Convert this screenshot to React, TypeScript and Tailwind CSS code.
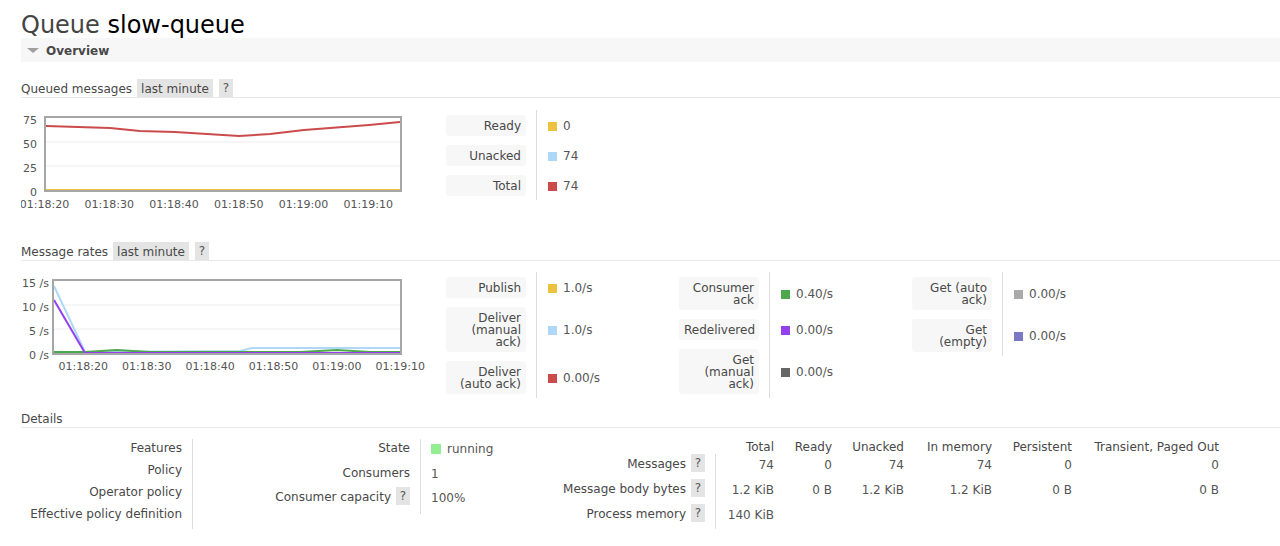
import React from "react";

type Row = { label: React.ReactNode; swatch: string; value: string };

function HelpBox() {
  return (
    <span className="inline-block h-[18px] w-[14px] bg-[#e4e4e4] pt-[1px] text-center leading-[17px] text-[#555]">
      ?
    </span>
  );
}

function SectionHeader({ title, buttons }: { title: string; buttons?: boolean }) {
  return (
    <div className="flex h-[19px] items-start border-b border-[#e8e8e8] text-[#484848]">
      <span className="pt-[2px] leading-[16px]">{title}</span>
      {buttons && (
        <>
          <span className="ml-[5px] h-[18px] bg-[#e4e4e4] px-[4px] pt-[2px] leading-[16px]">last minute</span>
          <span className="ml-[6px] flex">
            <HelpBox />
          </span>
        </>
      )}
    </div>
  );
}

function Legend({ rows }: { rows: Row[] }) {
  return (
    <div className="grid w-[233px] shrink-0 grid-cols-[91px_1fr] content-start">
      {rows.map((r, i) => (
        <React.Fragment key={i}>
          <div className="border-r border-[#dddddd] pt-[5px] pr-[10px] pb-[4px]">
            <div className="whitespace-nowrap rounded-[3px] bg-[#f7f7f7] px-[5px] pt-[5px] pb-[4px] text-right leading-[12px] text-[#484848]">
              {r.label}
            </div>
          </div>
          <div className="flex items-center pl-[11px] pt-[2px] text-[#555]">
            <span className={`mr-[6px] h-[9px] w-[9px] ${r.swatch}`} />
            <span>{r.value}</span>
          </div>
        </React.Fragment>
      ))}
    </div>
  );
}

function QueuedChart() {
  const xs = ["01:18:20", "01:18:30", "01:18:40", "01:18:50", "01:19:00", "01:19:10"];
  return (
    <svg width="404" height="100" viewBox="21 110 404 100" className="shrink-0">
      <line x1="46" y1="142" x2="400" y2="142" stroke="#ececec" strokeWidth="1" />
      <line x1="46" y1="166" x2="400" y2="166" stroke="#ececec" strokeWidth="1" />
      <polyline points="46,190 400,190" fill="none" stroke="#edc240" strokeWidth="2" />
      <polyline
        points="46,126 110,128 140,131 175,132 239,136 270,134 304,130 369,125 400,122"
        fill="none"
        stroke="#cb4b4b"
        strokeWidth="2"
      />
      <rect x="45" y="117" width="356" height="74" fill="none" stroke="#a6a6a6" strokeWidth="2" />
      <g fontSize="11" fill="#545454" fontFamily="DejaVu Sans, sans-serif">
        <text x="37" y="123.5" textAnchor="end">75</text>
        <text x="37" y="147.5" textAnchor="end">50</text>
        <text x="37" y="171.5" textAnchor="end">25</text>
        <text x="37" y="195.5" textAnchor="end">0</text>
        {xs.map((t, i) => (
          <text key={t} x={44.5 + i * 64.76} y="208" textAnchor="middle">
            {t}
          </text>
        ))}
      </g>
    </svg>
  );
}

function RatesChart() {
  const xs = ["01:18:20", "01:18:30", "01:18:40", "01:18:50", "01:19:00", "01:19:10"];
  return (
    <svg width="404" height="100" viewBox="21 273 404 100" className="shrink-0">
      <line x1="54" y1="306" x2="400" y2="306" stroke="#ececec" strokeWidth="1" />
      <line x1="54" y1="330" x2="400" y2="330" stroke="#ececec" strokeWidth="1" />
      <polyline
        points="54,287 85,353 240,352 252,349 400,349"
        fill="none"
        stroke="#afd8f8"
        strokeWidth="2"
      />
      <polyline points="54,354 400,354" fill="none" stroke="#cb4b4b" strokeWidth="2" />
      <polyline
        points="54,353 85,353 117,351 150,353 300,353 337,351 370,353 400,353"
        fill="none"
        stroke="#4da74d"
        strokeWidth="2"
      />
      <polyline points="54,301 85,354 400,354" fill="none" stroke="#9440ed" strokeWidth="2" />
      <rect x="53" y="281" width="348" height="74" fill="none" stroke="#a6a6a6" strokeWidth="2" />
      <g fontSize="11" fill="#545454" fontFamily="DejaVu Sans, sans-serif">
        <text x="49" y="287.5" textAnchor="end">15 /s</text>
        <text x="49" y="311.5" textAnchor="end">10 /s</text>
        <text x="49" y="335.5" textAnchor="end">5 /s</text>
        <text x="49" y="359.5" textAnchor="end">0 /s</text>
        {xs.map((t, i) => (
          <text key={t} x={83.3 + i * 63.4} y="371" textAnchor="middle">
            {t}
          </text>
        ))}
      </g>
    </svg>
  );
}

const queued: Row[] = [
  { label: "Ready", swatch: "bg-[#edc240]", value: "0" },
  { label: "Unacked", swatch: "bg-[#afd8f8]", value: "74" },
  { label: "Total", swatch: "bg-[#cb4b4b]", value: "74" },
];

const rates1: Row[] = [
  { label: "Publish", swatch: "bg-[#edc240]", value: "1.0/s" },
  { label: <>Deliver<br />(manual<br />ack)</>, swatch: "bg-[#afd8f8]", value: "1.0/s" },
  { label: <>Deliver<br />(auto ack)</>, swatch: "bg-[#cb4b4b]", value: "0.00/s" },
];

const rates2: Row[] = [
  { label: <>Consumer<br />ack</>, swatch: "bg-[#4da74d]", value: "0.40/s" },
  { label: "Redelivered", swatch: "bg-[#9440ed]", value: "0.00/s" },
  { label: <>Get<br />(manual<br />ack)</>, swatch: "bg-[#666666]", value: "0.00/s" },
];

const rates3: Row[] = [
  { label: <>Get (auto<br />ack)</>, swatch: "bg-[#aaaaaa]", value: "0.00/s" },
  { label: <>Get<br />(empty)</>, swatch: "bg-[#7c79c4]", value: "0.00/s" },
];

const stats = [
  { label: "Messages", vals: ["74", "0", "74", "74", "0", "0"] },
  { label: "Message body bytes", vals: ["1.2 KiB", "0 B", "1.2 KiB", "1.2 KiB", "0 B", "0 B"] },
  { label: "Process memory", vals: ["140 KiB", "", "", "", "", ""] },
];

const heads = ["Total", "Ready", "Unacked", "In memory", "Persistent", "Transient, Paged Out"];

function Details() {
  return (
    <div className="mt-[11px] flex text-[#484848]">
      {/* policies */}
      <div className="flex w-[172px] shrink-0 flex-col border-r border-[#dddddd] pr-[10px] text-right">
        {["Features", "Policy", "Operator policy", "Effective policy definition"].map((l) => (
          <div key={l} className="h-[22px] whitespace-nowrap pt-[2px] leading-[15px]">
            {l}
          </div>
        ))}
        <div className="h-px" />
      </div>

      {/* state */}
      <div className="flex w-[228px] shrink-0 flex-col self-start border-r border-[#dddddd] pr-[10px] text-right">
        <div className="h-[24px] pt-[2px] leading-[15px]">State</div>
        <div className="h-[24px] pt-[3px] leading-[15px]">Consumers</div>
        <div className="flex h-[27px] items-start justify-end gap-[5px]">
          <span className="pt-[2px] leading-[16px]">Consumer capacity</span>
          <HelpBox />
        </div>
      </div>
      <div className="flex w-[120px] shrink-0 flex-col pl-[10px] text-[#555]">
        <div className="flex h-[24px] items-start gap-[6px] pt-[2px] leading-[16px]">
          <span className="mt-[3px] h-[10px] w-[10px] bg-[#93ee93]" />
          <span>running</span>
        </div>
        <div className="h-[24px] pt-[4px] leading-[15px]">1</div>
        <div className="h-[27px] pt-[3px] leading-[16px]">100%</div>
      </div>

      {/* stats */}
      <div className="grid grid-cols-[175px_58px_58px_72px_88px_80px_147px] self-start">
        <div className="h-[15px]" />
        {heads.map((h) => (
          <div key={h} className="h-[15px] whitespace-nowrap pt-[2px] text-right leading-[13px]">
            {h}
          </div>
        ))}
        {stats.map((s) => (
          <React.Fragment key={s.label}>
            <div className="flex h-[25px] items-start justify-end gap-[5px] border-r border-[#dddddd] pr-[10px]">
              <span className="whitespace-nowrap pt-[2px] leading-[16px]">{s.label}</span>
              <HelpBox />
            </div>
            {s.vals.map((v, i) => (
              <div key={i} className="h-[25px] whitespace-nowrap pt-[3px] text-right leading-[16px] text-[#555]">
                {v}
              </div>
            ))}
          </React.Fragment>
        ))}
      </div>
    </div>
  );
}

export default function App() {
  return (
    <div className="min-h-[546px] w-[1280px] overflow-hidden bg-white pl-[21px] font-['DejaVu_Sans',Verdana,sans-serif] text-[12px] text-[#484848]">
      <h1 className="h-[38px] pt-[12px] text-[24px] leading-[26px] text-[#444]">
        Queue <span className="text-black">slow-queue</span>
      </h1>

      <div className="flex h-[24px] items-center bg-[#f7f7f7] pl-[6px]">
        <span className="mt-[1px] h-0 w-0 border-x-[6px] border-t-[5px] border-x-transparent border-t-[#a0a0a0]" />
        <span className="ml-[7px] pt-[2px] font-bold leading-[22px] text-[#484848]">Overview</span>
      </div>

      <div className="mt-[17px]">
        <SectionHeader title="Queued messages" buttons />
      </div>
      <div className="mt-[12px] flex">
        <QueuedChart />
        <div className="ml-[21px]">
          <Legend rows={queued} />
        </div>
      </div>

      <div className="mt-[32px]">
        <SectionHeader title="Message rates" buttons />
      </div>
      <div className="mt-[11px] flex items-start">
        <RatesChart />
        <div className="ml-[21px] flex items-start">
          <Legend rows={rates1} />
          <Legend rows={rates2} />
          <Legend rows={rates3} />
        </div>
      </div>

      <div className="mt-[11px]">
        <SectionHeader title="Details" />
      </div>
      <Details />
    </div>
  );
}
